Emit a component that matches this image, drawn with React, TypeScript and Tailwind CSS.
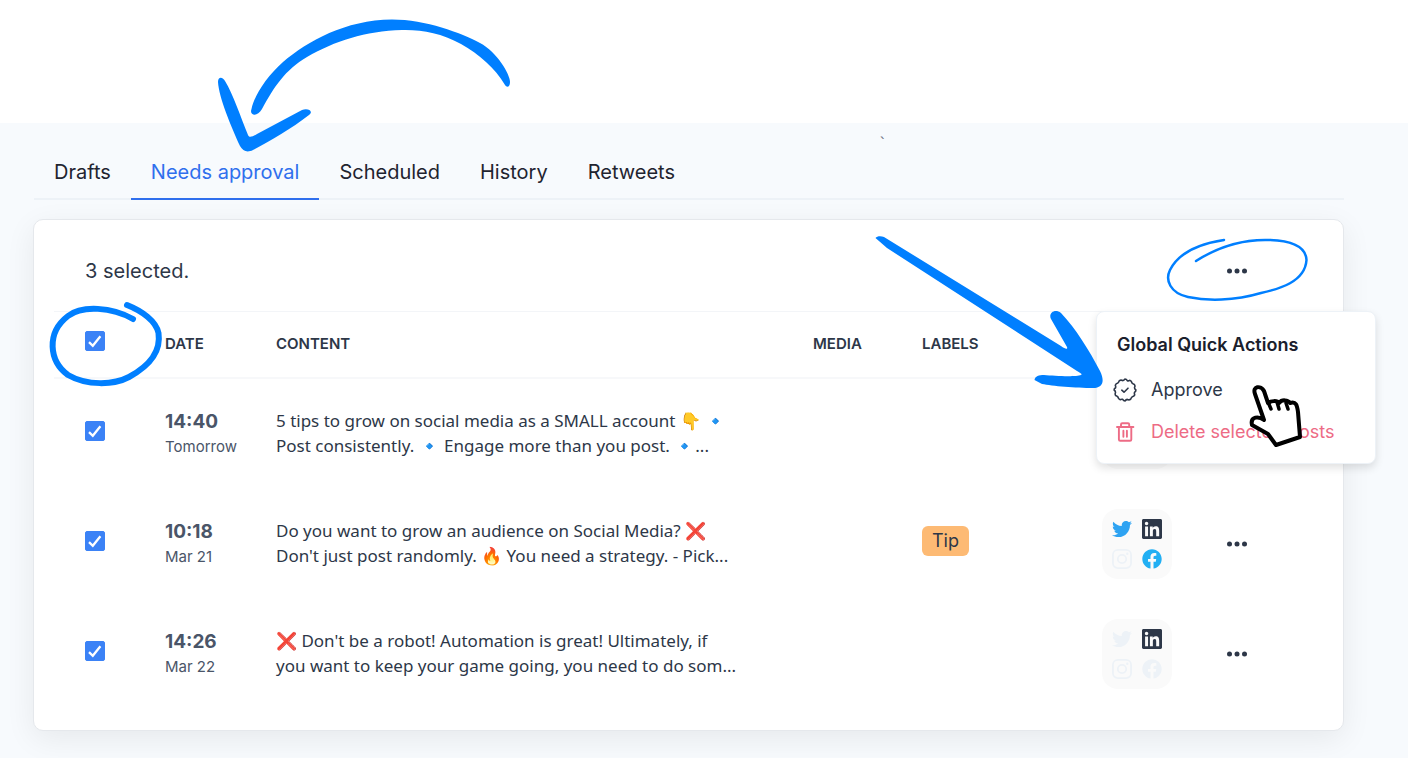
import React from "react";
import { FaTwitter, FaFacebook, FaLinkedin } from "react-icons/fa";

type Network = "twitter" | "linkedin" | "instagram" | "facebook";
type Post = {
  time: string;
  date: string;
  lines: [string, string];
  label?: string;
  networks: Network[];
};

const tabs = ["Drafts", "Needs approval", "Scheduled", "History", "Retweets"];

const posts: Post[] = [
  {
    time: "14:40",
    date: "Tomorrow",
    lines: [
      "5 tips to grow on social media as a SMALL account 👇 🔹",
      "Post consistently. 🔹 Engage more than you post. 🔹...",
    ],
    networks: ["twitter", "linkedin"],
  },
  {
    time: "10:18",
    date: "Mar 21",
    lines: [
      "Do you want to grow an audience on Social Media? ❌",
      "Don't just post randomly. 🔥 You need a strategy. - Pick...",
    ],
    label: "Tip",
    networks: ["twitter", "linkedin", "facebook"],
  },
  {
    time: "14:26",
    date: "Mar 22",
    lines: [
      "❌ Don't be a robot! Automation is great! Ultimately, if",
      "you want to keep your game going, you need to do som...",
    ],
    networks: ["linkedin"],
  },
];

function Check({ label }: { label: string }) {
  return (
    <label className="grid size-5">
      <input
        type="checkbox"
        defaultChecked
        aria-label={label}
        className="col-start-1 row-start-1 size-5 appearance-none rounded-[2px] border border-gray-300 bg-white checked:border-[#3b82f6] checked:bg-[#3b82f6]"
      />
      <svg viewBox="0 0 20 20" className="pointer-events-none col-start-1 row-start-1 size-5" aria-hidden="true">
        <path d="M4 11.200 7.800 14.800 15.400 5.200" fill="none" stroke="#fff" strokeWidth="2.300" />
      </svg>
    </label>
  );
}

function Dots({ label }: { label: string }) {
  return (
    <button type="button" aria-label={label} className="block cursor-pointer text-[#2d3748]">
      <svg viewBox="0 0 20 20" className="size-5" fill="currentColor" aria-hidden="true">
        <circle cx="2.5" cy="10" r="2.5" />
        <circle cx="10" cy="10" r="2.5" />
        <circle cx="17.5" cy="10" r="2.5" />
      </svg>
    </button>
  );
}

function Instagram({ className }: { className: string }) {
  return (
    <svg viewBox="0 0 20 20" className={className} fill="none" stroke="currentColor" strokeWidth="1.8" aria-hidden="true">
      <rect x="0.9" y="0.9" width="18.2" height="18.2" rx="5" />
      <circle cx="10" cy="10" r="4.2" />
      <circle cx="15.3" cy="4.7" r="1.2" fill="currentColor" stroke="none" />
    </svg>
  );
}

function Networks({ active }: { active: Network[] }) {
  const on = (n: Network) => active.includes(n);
  return (
    <div className="grid w-[70px] grid-cols-2 gap-[10px] rounded-2xl bg-[#fafafa] p-[10px]">
      <FaTwitter className={on("twitter") ? "size-5 text-[#2ea3f2]" : "size-5 text-[#edf2f7]"} />
      <FaLinkedin viewBox="0 32 448 448" className={on("linkedin") ? "size-5 text-[#2d3748]" : "size-5 text-[#edf2f7]"} />
      <Instagram className="size-5 text-[#edf2f7]" />
      <FaFacebook className={on("facebook") ? "size-5 text-[#22aff3]" : "size-5 text-[#edf2f7]"} />
    </div>
  );
}

function QuickActions() {
  return (
    <div className="absolute top-[91px] -right-[33px] z-10 w-[280px] rounded-lg border border-[#edf2f7] bg-white px-5 pt-[21px] pb-[19px] shadow-[0_4px_8px_rgba(0,0,0,0.12)]">
      <h2 className="text-lg leading-6 font-semibold text-[#1a202c]">Global Quick Actions</h2>
      <button type="button" className="mt-[21px] -ml-1 flex cursor-pointer items-center gap-[14px] text-lg leading-6 text-[#2d3748]">
        <svg viewBox="0 0 24 24" className="size-6" fill="none" stroke="currentColor" strokeWidth="1.6" strokeLinecap="round" strokeLinejoin="round" aria-hidden="true">
          <path d="M12 1Q13.400 1 14.300 2.700Q15.500 3.100 16.700 2.300Q18.600 3 19 5Q20 6 21.400 6.500Q22.600 8 21.500 9.700Q21.500 11 22.900 12Q23 13.300 21.500 14.300Q21.100 15.400 21.700 16.900Q21.100 18.500 19.200 18.800Q18.200 19.600 17.600 21.300Q16 22.300 14.300 21.400Q13 21.600 12 23Q10.600 22.900 9.700 21.400Q8.500 21.100 7.200 21.700Q5.300 21.100 5 19.100Q4.100 18.100 2.600 17.600Q1.600 16 2.500 14.300Q2.400 13 1.100 12Q1 10.600 2.600 9.700Q2.900 8.500 2.300 7.200Q2.900 5.400 4.900 5Q5.900 4.100 6.400 2.600Q8 1.700 9.700 2.600Q11 2.400 12 1Z" />
          <path d="m8.800 12.200 2.200 2 4-4" />
        </svg>
        Approve
      </button>
      <button type="button" className="mt-[18px] -ml-1 flex cursor-pointer items-center gap-[14px] text-lg leading-6 text-[#ed6b85]">
        <svg viewBox="0 0 24 24" className="size-6" fill="none" stroke="currentColor" strokeWidth="1.900" strokeLinecap="round" strokeLinejoin="round" aria-hidden="true">
          <path d="M4 7h16.400M8 7V4.500A1.200 1.200 0 0 1 9.200 3.300h5.800A1.200 1.200 0 0 1 16.200 4.500V7M5.900 7v12.500A1.300 1.300 0 0 0 7.200 20.800h9.800a1.300 1.300 0 0 0 1.300-1.300V7M10.400 10.700v6M13.900 10.700v6" />
        </svg>
        Delete selected posts
      </button>
    </div>
  );
}

function Annotations() {
  return (
    <svg width="1408" height="758" viewBox="0 0 1408 758" className="pointer-events-none absolute top-0 left-0 z-20 max-w-none" aria-hidden="true">
      <g fill="#007fff">
        <path d="M251.500 109C254 96 267 76 283 62C308 41 345 20 392 19.500C426 19.500 461 33 480 43C497 52 510 74 510 82C510 87 507 88 505 85C495 68 479 54 461 44C441 33 422 29.500 402 30C365 31 335 41 307 57C285 70 274 87 262 109C257 118 249 115 251.500 109Z" />
        <path d="M218 82C218 76 223 77 225 81C233 94 241 118 248 135C249 138 252 137 257 134L302 110C308 108 314 111 309 115C291 129 270 141 253 150C247 153 243 151 240 146C231 126 219 98 218 82Z" />
        <path d="M875.500 238C877 236 881 236 884 237L1061 346C1065 349 1068 350 1067 347L1051 319C1048 313 1055 308 1061 313C1076 329 1089 350 1100 371C1105 381 1103 388 1093 388C1076 388 1052 386 1042 384L1034.500 380C1035 376 1039 375 1044 375C1055 376 1076 377 1081 375C1083 374 1080 373 1077 371L887 248Z" />
      </g>
      <g fill="none" stroke="#007fff" strokeLinecap="round">
        <path strokeWidth="6" d="M133 319C112 307 82 305 68 316C46 333 49 361 68 375C87 386 114 385 129 377C151 365 161 350 158.500 333C156 321 142 311 127 305" />
        <path strokeWidth="2.500" d="M1196 261C1221 245 1245 239 1270 240C1298 241 1306 250 1306.500 260C1305 282 1279 289 1261 293C1234 301 1207 301 1188 297C1170 293 1165 280 1170 270C1178 254 1198 244 1224 240" />
      </g>
      <path d="M1255 394C1252 386 1261 385 1264 391L1268 403C1271 401 1277 400 1279 403C1282 399 1288 400 1290 403C1296 401 1297 405 1298 412L1300 437L1276 445L1268 434L1252 425C1250 416 1259 416 1264 420L1255 394Z" fill="#fff" stroke="#000" strokeWidth="4" strokeLinejoin="round" />
      <path d="M1268 402 1271 409M1277 402 1279 409M1286 403 1288 409" fill="none" stroke="#000" strokeWidth="3.500" strokeLinecap="round" />
    </svg>
  );
}

export default function App() {
  return (
    <div className="relative min-h-screen overflow-hidden bg-white pt-[123px] font-['Inter',sans-serif]">
      <main className="relative min-h-[635px] bg-[#f7fafd] pr-16 pb-7 pl-[33px]">
        <span className="absolute top-2 left-[880px] font-['Open_Sans',sans-serif] text-base text-gray-500">`</span>
        <nav className="ml-px flex h-[77px] items-end border-b-2 border-[#edf2f7]">
          {tabs.map((tab) => (
            <a
              key={tab}
              href="#"
              className={
                tab === "Needs approval"
                  ? "-mb-[2px] border-b-2 border-[#2f6fed] px-5 pb-[10px] text-xl leading-8 text-[#2f6fed]"
                  : "-mb-[2px] border-b-2 border-transparent px-5 pb-[10px] text-xl leading-8 text-[#1f2430]"
              }
            >
              {tab}
            </a>
          ))}
        </nav>
        <section className="relative mt-[19px] rounded-[10px] border border-[#e5e8ec] bg-white px-5 pb-[22px] shadow-[0_8px_30px_rgba(0,0,0,0.07)]">
          <div className="flex h-[91px] items-center justify-between pt-[10px] pr-[76px] pl-[31px]">
            <p className="text-xl text-[#2d3748]">3 selected.</p>
            <Dots label="Open global quick actions" />
          </div>
          <table className="w-full table-fixed border-collapse text-left text-[#2d3748]">
            <colgroup>
              <col className="w-[111px]" />
              <col className="w-[111px]" />
              <col />
              <col className="w-[109px]" />
              <col className="w-[180px]" />
              <col className="w-[125px]" />
              <col className="w-[96px]" />
            </colgroup>
            <thead>
              <tr className="h-[66px] border-t border-b-2 border-[#f7f8fa] border-t-[#f3f5f8] text-[15px] font-semibold">
                <th className="pb-[6px] pl-[31px]"><Check label="Select all posts" /></th>
                <th className="font-semibold">DATE</th>
                <th className="font-semibold">CONTENT</th>
                <th className="font-semibold">MEDIA</th>
                <th className="font-semibold">LABELS</th>
                <th aria-label="Networks" />
                <th aria-label="Actions" />
              </tr>
            </thead>
            <tbody>
              {posts.map((post) => (
                <tr key={post.time} className="h-[110px]">
                  <td className="pb-1 pl-[31px]"><Check label={`Select post at ${post.time}`} /></td>
                  <td className="pt-[2px]">
                    <div className="text-[19px] leading-[25px] font-bold text-[#4a5568]">{post.time}</div>
                    <div className="text-[15px] leading-[25px] text-[#4a5568]">{post.date}</div>
                  </td>
                  <td className="font-['Noto_Sans','Open_Sans',sans-serif] text-[17px] leading-[25px] whitespace-nowrap">
                    {post.lines[0]}
                    <br />
                    {post.lines[1]}
                  </td>
                  <td />
                  <td className="pb-1">
                    {post.label && <span className="inline-block rounded-md bg-[#fdba74] px-[10px] text-lg leading-[30px] text-[#2d3748]">{post.label}</span>}
                  </td>
                  <td className="pt-[2px]"><Networks active={post.networks} /></td>
                  <td className="pt-[2px]"><Dots label={`Actions for post at ${post.time}`} /></td>
                </tr>
              ))}
            </tbody>
          </table>
          <QuickActions />
        </section>
      </main>
      <Annotations />
    </div>
  );
}
